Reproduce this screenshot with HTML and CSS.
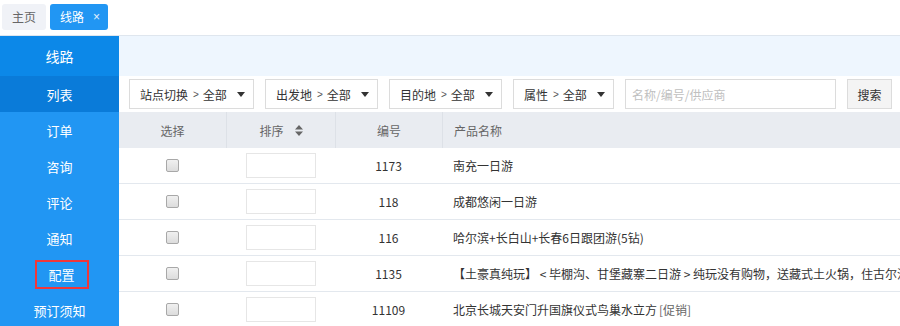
FILE: index.html
```html
<!DOCTYPE html>
<html lang="zh-CN">
<head>
<meta charset="utf-8">
<title>线路</title>
<link rel="stylesheet" href="styles.css">
</head>
<body>
<div class="tabs">
  <span class="tab">主页</span>
  <span class="tab tab-active">线路<span class="tab-close">×</span></span>
</div>
<div class="layout">
  <aside class="side">
    <div class="side-head">线路</div>
    <div class="side-item side-cur">列表</div>
    <div class="side-item">订单</div>
    <div class="side-item">咨询</div>
    <div class="side-item">评论</div>
    <div class="side-item">通知</div>
    <div class="side-item"><span class="mark">配置</span></div>
    <div class="side-item">预订须知</div>
  </aside>
  <main class="main">
    <div class="band"></div>
    <div class="filters">
      <div class="sel w1">站点切换<span class="gt">&gt;</span>全部<span class="caret"></span></div>
      <div class="sel w2">出发地<span class="gt">&gt;</span>全部<span class="caret"></span></div>
      <div class="sel w2">目的地<span class="gt">&gt;</span>全部<span class="caret"></span></div>
      <div class="sel w3">属性<span class="gt">&gt;</span>全部<span class="caret"></span></div>
      <div class="search">名称/编号/供应商</div>
      <div class="btn">搜索</div>
    </div>
    <div class="grid">
      <div class="row head">
        <div class="c c1">选择</div>
        <div class="c c2">排序<svg class="sort" width="8" height="11" viewBox="0 0 8 11"><path d="M4 0 L8 4.5 L0 4.5 Z M0 6.5 L8 6.5 L4 11 Z" fill="#666"/></svg></div>
        <div class="c c3">编号</div>
        <div class="c c4">产品名称</div>
      </div>
      <div class="row">
        <div class="c c1"><span class="cb"></span></div>
        <div class="c c2"><span class="inp"></span></div>
        <div class="c c3">1173</div>
        <div class="c c4">南充一日游</div>
      </div>
      <div class="row">
        <div class="c c1"><span class="cb"></span></div>
        <div class="c c2"><span class="inp"></span></div>
        <div class="c c3">118</div>
        <div class="c c4">成都悠闲一日游</div>
      </div>
      <div class="row">
        <div class="c c1"><span class="cb"></span></div>
        <div class="c c2"><span class="inp"></span></div>
        <div class="c c3">116</div>
        <div class="c c4">哈尔滨+长白山+长春6日跟团游(5钻)</div>
      </div>
      <div class="row">
        <div class="c c1"><span class="cb"></span></div>
        <div class="c c2"><span class="inp"></span></div>
        <div class="c c3">1135</div>
        <div class="c c4">【土豪真纯玩】 &lt; 毕棚沟、甘堡藏寨二日游 &gt; 纯玩没有购物，送藏式土火锅，住古尔沟温泉酒店</div>
      </div>
      <div class="row">
        <div class="c c1"><span class="cb"></span></div>
        <div class="c c2"><span class="inp"></span></div>
        <div class="c c3">11109</div>
        <div class="c c4">北京长城天安门升国旗仪式鸟巢水立方 <span class="promo">[促销]</span></div>
      </div>
    </div>
  </main>
</div>
</body>
</html>
```

FILE: styles.css
```css
* { box-sizing: border-box; }
html, body { margin: 0; padding: 0; }
body {
  width: 900px;
  height: 326px;
  overflow: hidden;
  background: #fff;
  font-family: "Noto Sans CJK SC", "Liberation Sans", sans-serif;
  font-size: 12px;
  color: #333;
}
.tabs {
  height: 36px;
  border-bottom: 1px solid #dfe6ee;
  display: flex;
  align-items: flex-start;
  gap: 4px;
  padding: 4px 0 0 2px;
}
.tab {
  height: 26px;
  line-height: 26px;
  padding: 0 10px;
  background: #f0f2f7;
  color: #666;
  border-radius: 3px;
  display: flex;
  align-items: center;
}
.tab-active {
  background: #2196f3;
  color: #fff;
  padding: 0 8px 0 10px;
}
.tab-close {
  margin-left: 9px;
  font-family: "Liberation Sans", sans-serif;
  font-size: 12px;
  color: #e3f1fd;
}
.layout {
  display: flex;
  height: 290px;
}
.side {
  width: 119px;
  flex: none;
  background: #2196f3;
  color: #fff;
  font-size: 13px;
}
.side-head {
  height: 40px;
  line-height: 40px;
  text-align: center;
  background: #0c88e8;
  font-size: 14px;
}
.side-item {
  height: 36px;
  display: flex;
  align-items: center;
  justify-content: center;
}
.side-cur { background: #0a7bd9; }
.mark {
  display: inline-block;
  width: 54px;
  height: 29px;
  line-height: 25px;
  text-align: center;
  border: 2px solid #f0373a;
  margin-left: 4px;
}
.main {
  flex: 1;
  min-width: 0;
  overflow: hidden;
}
.band {
  height: 40px;
  background: #eef6fe;
}
.filters {
  height: 36px;
  display: flex;
  align-items: center;
  gap: 11px;
  padding-left: 10px;
}
.sel {
  height: 30px;
  border: 1px solid #dcdcdc;
  display: flex;
  align-items: center;
  padding-left: 10px;
  color: #333;
  white-space: nowrap;
}
.w1 { width: 125px; }
.w2 { width: 113px; }
.w3 { width: 101px; }
.gt {
  font-family: "Liberation Sans", sans-serif;
  font-size: 10px;
  margin: 0 4px 0 5px;
  color: #555;
}
.caret {
  width: 0;
  height: 0;
  border-left: 4px solid transparent;
  border-right: 4px solid transparent;
  border-top: 5px solid #333;
  margin-left: 10px;
}
.search {
  width: 211px;
  height: 30px;
  border: 1px solid #dcdcdc;
  display: flex;
  align-items: center;
  padding-left: 6px;
  color: #c0c0c0;
}
.btn {
  width: 45px;
  height: 30px;
  border: 1px solid #dcdcdc;
  background: #f4f4f4;
  display: flex;
  align-items: center;
  justify-content: center;
  color: #333;
}
.grid { width: 1000px; }
.row {
  display: flex;
  height: 36px;
  border-bottom: 1px solid #e3e8ee;
}
.row.head {
  background: #e9ecf1;
  border-bottom: none;
  color: #666;
}
.c {
  display: flex;
  align-items: center;
  justify-content: center;
  white-space: nowrap;
}
.c1 { width: 107px; }
.c2 { width: 109px; }
.c3 { width: 107px; }
.c4 { flex: 1; justify-content: flex-start; padding-left: 11px; }
.head .c2, .head .c3, .head .c4 { border-left: 1px solid #dde1e7; }
.sort {
  margin-left: 11px;
}
.cb {
  width: 13px;
  height: 13px;
  border: 1px solid #a8a8a8;
  border-radius: 2px;
  background: linear-gradient(#f0f0f0, #dcdcdc);
}
.inp {
  width: 70px;
  height: 25px;
  border: 1px solid #e6e6e6;
  background: #fff;
  margin-left: 1px;
}
.promo { color: #666; margin-left: 2px; }
```
